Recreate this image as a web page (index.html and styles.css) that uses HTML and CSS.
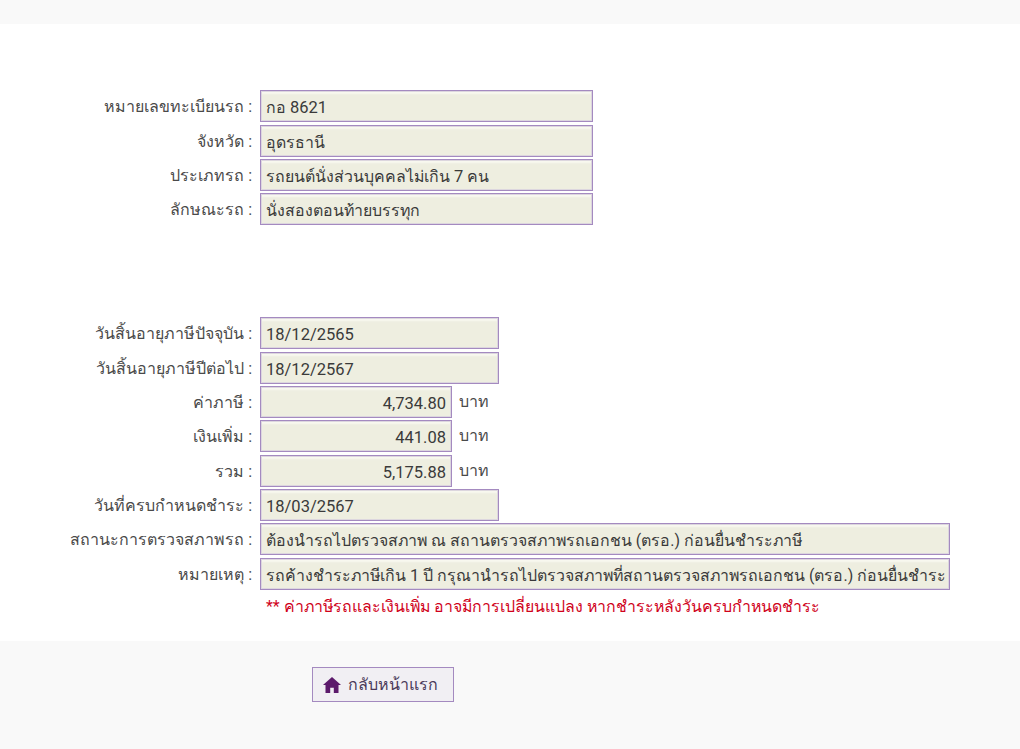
FILE: index.html
```html
<!DOCTYPE html>
<html lang="th">
<head>
<meta charset="utf-8">
<title>ตรวจสอบภาษีรถ</title>
<link rel="stylesheet" href="styles.css">
</head>
<body>
<header class="top-band"></header>
<main class="content">
  <section class="group group-vehicle">
    <div class="row"><label class="label">หมายเลขทะเบียนรถ :</label><div class="field w-lg">กอ <span class="lat">8621</span></div></div>
    <div class="row"><label class="label">จังหวัด :</label><div class="field w-lg">อุดรธานี</div></div>
    <div class="row"><label class="label">ประเภทรถ :</label><div class="field w-lg">รถยนต์นั่งส่วนบุคคลไม่เกิน <span class="lat">7</span> คน</div></div>
    <div class="row"><label class="label">ลักษณะรถ :</label><div class="field w-lg">นั่งสองตอนท้ายบรรทุก</div></div>
  </section>
  <section class="group group-tax">
    <div class="row"><label class="label">วันสิ้นอายุภาษีปัจจุบัน :</label><div class="field w-md lat">18/12/2565</div></div>
    <div class="row"><label class="label">วันสิ้นอายุภาษีปีต่อไป :</label><div class="field w-md lat">18/12/2567</div></div>
    <div class="row"><label class="label">ค่าภาษี :</label><div class="field w-sm num lat">4,734.80</div><span class="unit">บาท</span></div>
    <div class="row"><label class="label">เงินเพิ่ม :</label><div class="field w-sm num lat">441.08</div><span class="unit">บาท</span></div>
    <div class="row"><label class="label">รวม :</label><div class="field w-sm num lat">5,175.88</div><span class="unit">บาท</span></div>
    <div class="row"><label class="label">วันที่ครบกำหนดชำระ :</label><div class="field w-md lat">18/03/2567</div></div>
    <div class="row"><label class="label">สถานะการตรวจสภาพรถ :</label><div class="field w-xl">ต้องนำรถไปตรวจสภาพ ณ สถานตรวจสภาพรถเอกชน (ตรอ.) ก่อนยื่นชำระภาษี</div></div>
    <div class="row"><label class="label">หมายเหตุ :</label><div class="field w-xl">รถค้างชำระภาษีเกิน <span class="lat">1</span> ปี กรุณานำรถไปตรวจสภาพที่สถานตรวจสภาพรถเอกชน (ตรอ.) ก่อนยื่นชำระ</div></div>
    <p class="notice">** ค่าภาษีรถและเงินเพิ่ม อาจมีการเปลี่ยนแปลง หากชำระหลังวันครบกำหนดชำระ</p>
  </section>
</main>
<footer class="bottom-band">
  <a class="home-btn" href="#">
    <svg class="home-icon" viewBox="0 0 18 16" aria-hidden="true"><path d="M9 0 18 8H15.500V16H10.800V10.800H7.200V16H2.500V8H0z"/></svg>
    <span>กลับหน้าแรก</span>
  </a>
</footer>
</body>
</html>
```
FILE: styles.css
```css
* { box-sizing: border-box; }
html, body { margin: 0; padding: 0; }
body {
  background: #fff;
  color: #333;
  font-family: Roboto, "Noto Sans", "Liberation Sans", sans-serif;
  font-size: 16px;
  height: 749px;
  overflow: hidden;
}
.top-band { height: 24px; background: #f9f9f9; }
.content { height: 617px; padding-top: 66.4px; }
.group { display: flex; flex-direction: column; gap: 2.35px; }
.group-tax { margin-top: 91.97px; }
.row { display: flex; align-items: center; height: 32px; }
.label {
  width: 252px;
  padding-top: 2px;
  text-align: right;
  color: #4a4a4a;
  white-space: nowrap;
  flex: none;
  line-height: 32px;
}
.field {
  height: 32px;
  margin-left: 8px;
  padding: 1px 5px 0;
  line-height: 31px;
  font-size: 15.9px;
  border: 1px solid #a48ac0;
  background: #eeeee0;
  box-shadow: inset 0 0 0 1px #dcd6de, inset 0 3px 2px #f8f8f0;
  color: #3a3a3a;
  white-space: nowrap;
  overflow: hidden;
  flex: none;
}
.field.lat, .lat { font-size: 16.5px; }
.w-lg { width: 333px; }
.w-md { width: 239px; }
.w-sm { width: 192px; }
.w-xl { width: 690px; }
.num { text-align: right; }
.unit { margin-left: 7px; color: #4a4a4a; line-height: 32px; }
.notice { margin: 2px 0 0 266px; color: #d0021b; font-size: 15.9px; line-height: 26px; white-space: nowrap; }
.bottom-band { height: 108px; background: #f9f9f9; padding: 26px 0 0 312px; }
.home-btn {
  display: flex;
  align-items: center;
  gap: 7px;
  width: 142px;
  height: 35px;
  padding-left: 10px;
  border: 1px solid #a48ac0;
  background: #f1eff3;
  color: #4a3a5a;
  text-decoration: none;
}
.home-icon { width: 18px; height: 16px; fill: #5c1a6b; flex: none; }
```
